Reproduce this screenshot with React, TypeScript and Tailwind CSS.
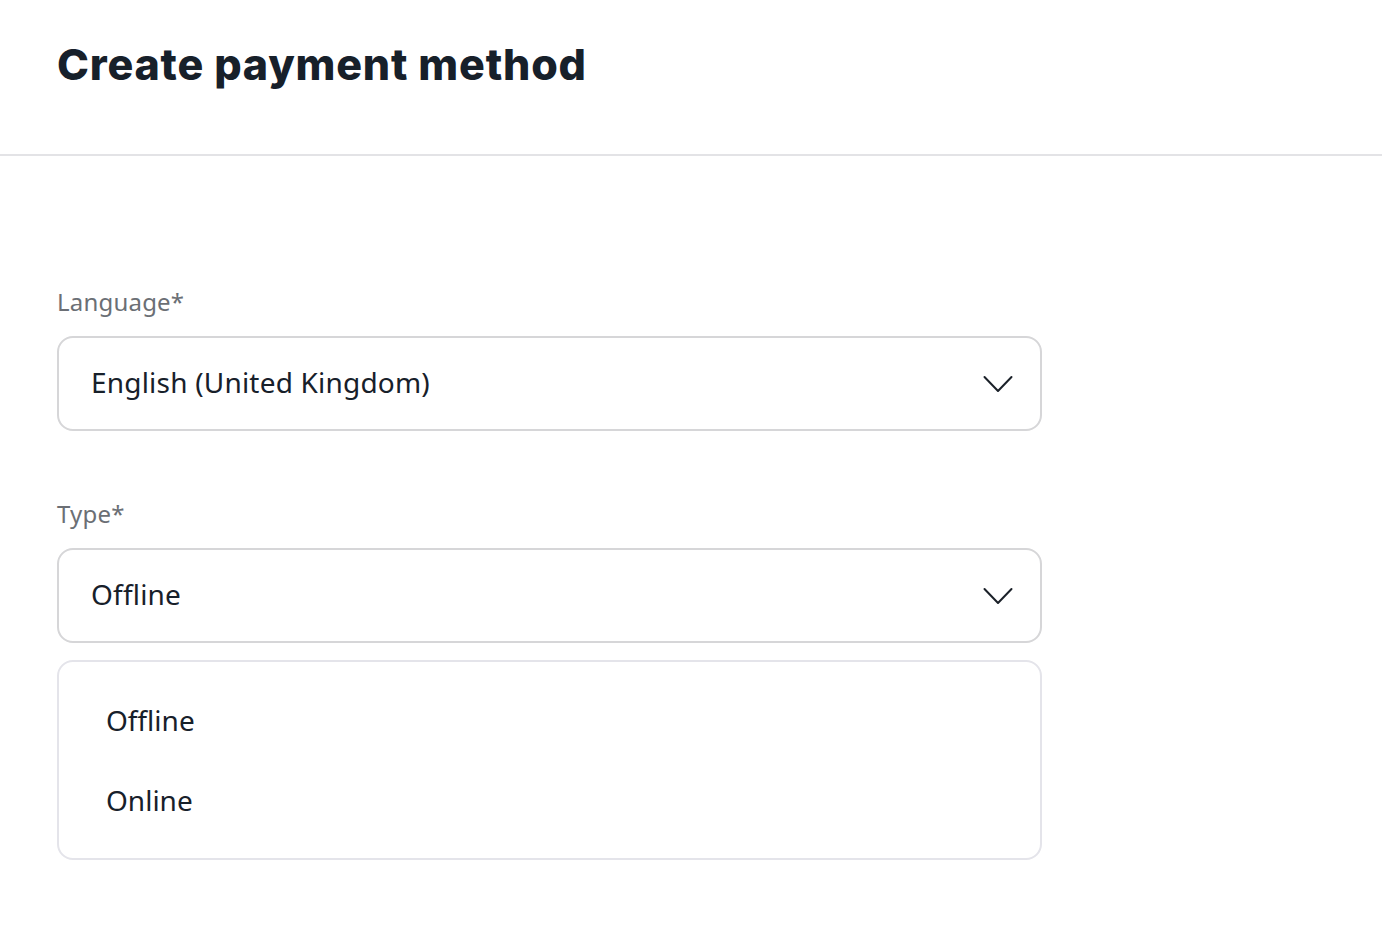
import React from 'react';

const body = { fontFamily: '"Noto Sans", "Open Sans", sans-serif' };

function Chevron() {
    return (
        <svg width="30" height="18" viewBox="0 0 30 18" fill="none" className="text-[#1b2129]">
            <path d="M1.5 2 L15 16 L28.5 2" stroke="currentColor" strokeWidth="2" strokeLinecap="round" strokeLinejoin="round" />
        </svg>
    );
}

function SelectField({ label, value }: { label: string; value: string }) {
    return (
        <div className="flex flex-col">
            <label className="text-[24px] leading-[30px] text-[#6b6f75] mb-[19px] tracking-[0.2px]">{label}</label>
            <div className="h-[95px] w-[985px] rounded-[16px] border-2 border-[#d6d6d8] bg-white flex items-center justify-between pl-[32px] pr-[27px]">
                <span className="text-[28px] leading-[40px] pb-[4px] text-[#17202a] tracking-[0.2px]">{value}</span>
                <Chevron />
            </div>
        </div>
    );
}

export default function App() {
    const options = ['Offline', 'Online'];

    return (
        <div className="min-h-[946px] w-full bg-white" style={body}>
            {/* Header */}
            <div className="h-[156px] border-b-2 border-[#e3e3e6] px-[57px] pt-[37px]">
                <h1
                    className="text-[43px] leading-[54px] font-extrabold text-[#17202a] tracking-[0.8px]"
                    style={{ fontFamily: 'Inter, "Liberation Sans", sans-serif' }}
                >
                    Create payment method
                </h1>
            </div>

            {/* Form */}
            <div className="px-[57px] pt-[131px] flex flex-col">
                <SelectField label="Language*" value="English (United Kingdom)" />
                <div className="mt-[68px]">
                    <SelectField label="Type*" value="Offline" />
                </div>

                {/* Dropdown list */}
                <div className="mt-[17px] w-[985px] rounded-[16px] border-2 border-[#e4e4ea] bg-white py-[38px] pl-[47px] flex flex-col gap-[40px]">
                    {options.map((option) => (
                        <div key={option} className="text-[28px] leading-[40px] text-[#17202a]">
                            {option}
                        </div>
                    ))}
                </div>
            </div>
        </div>
    );
}
